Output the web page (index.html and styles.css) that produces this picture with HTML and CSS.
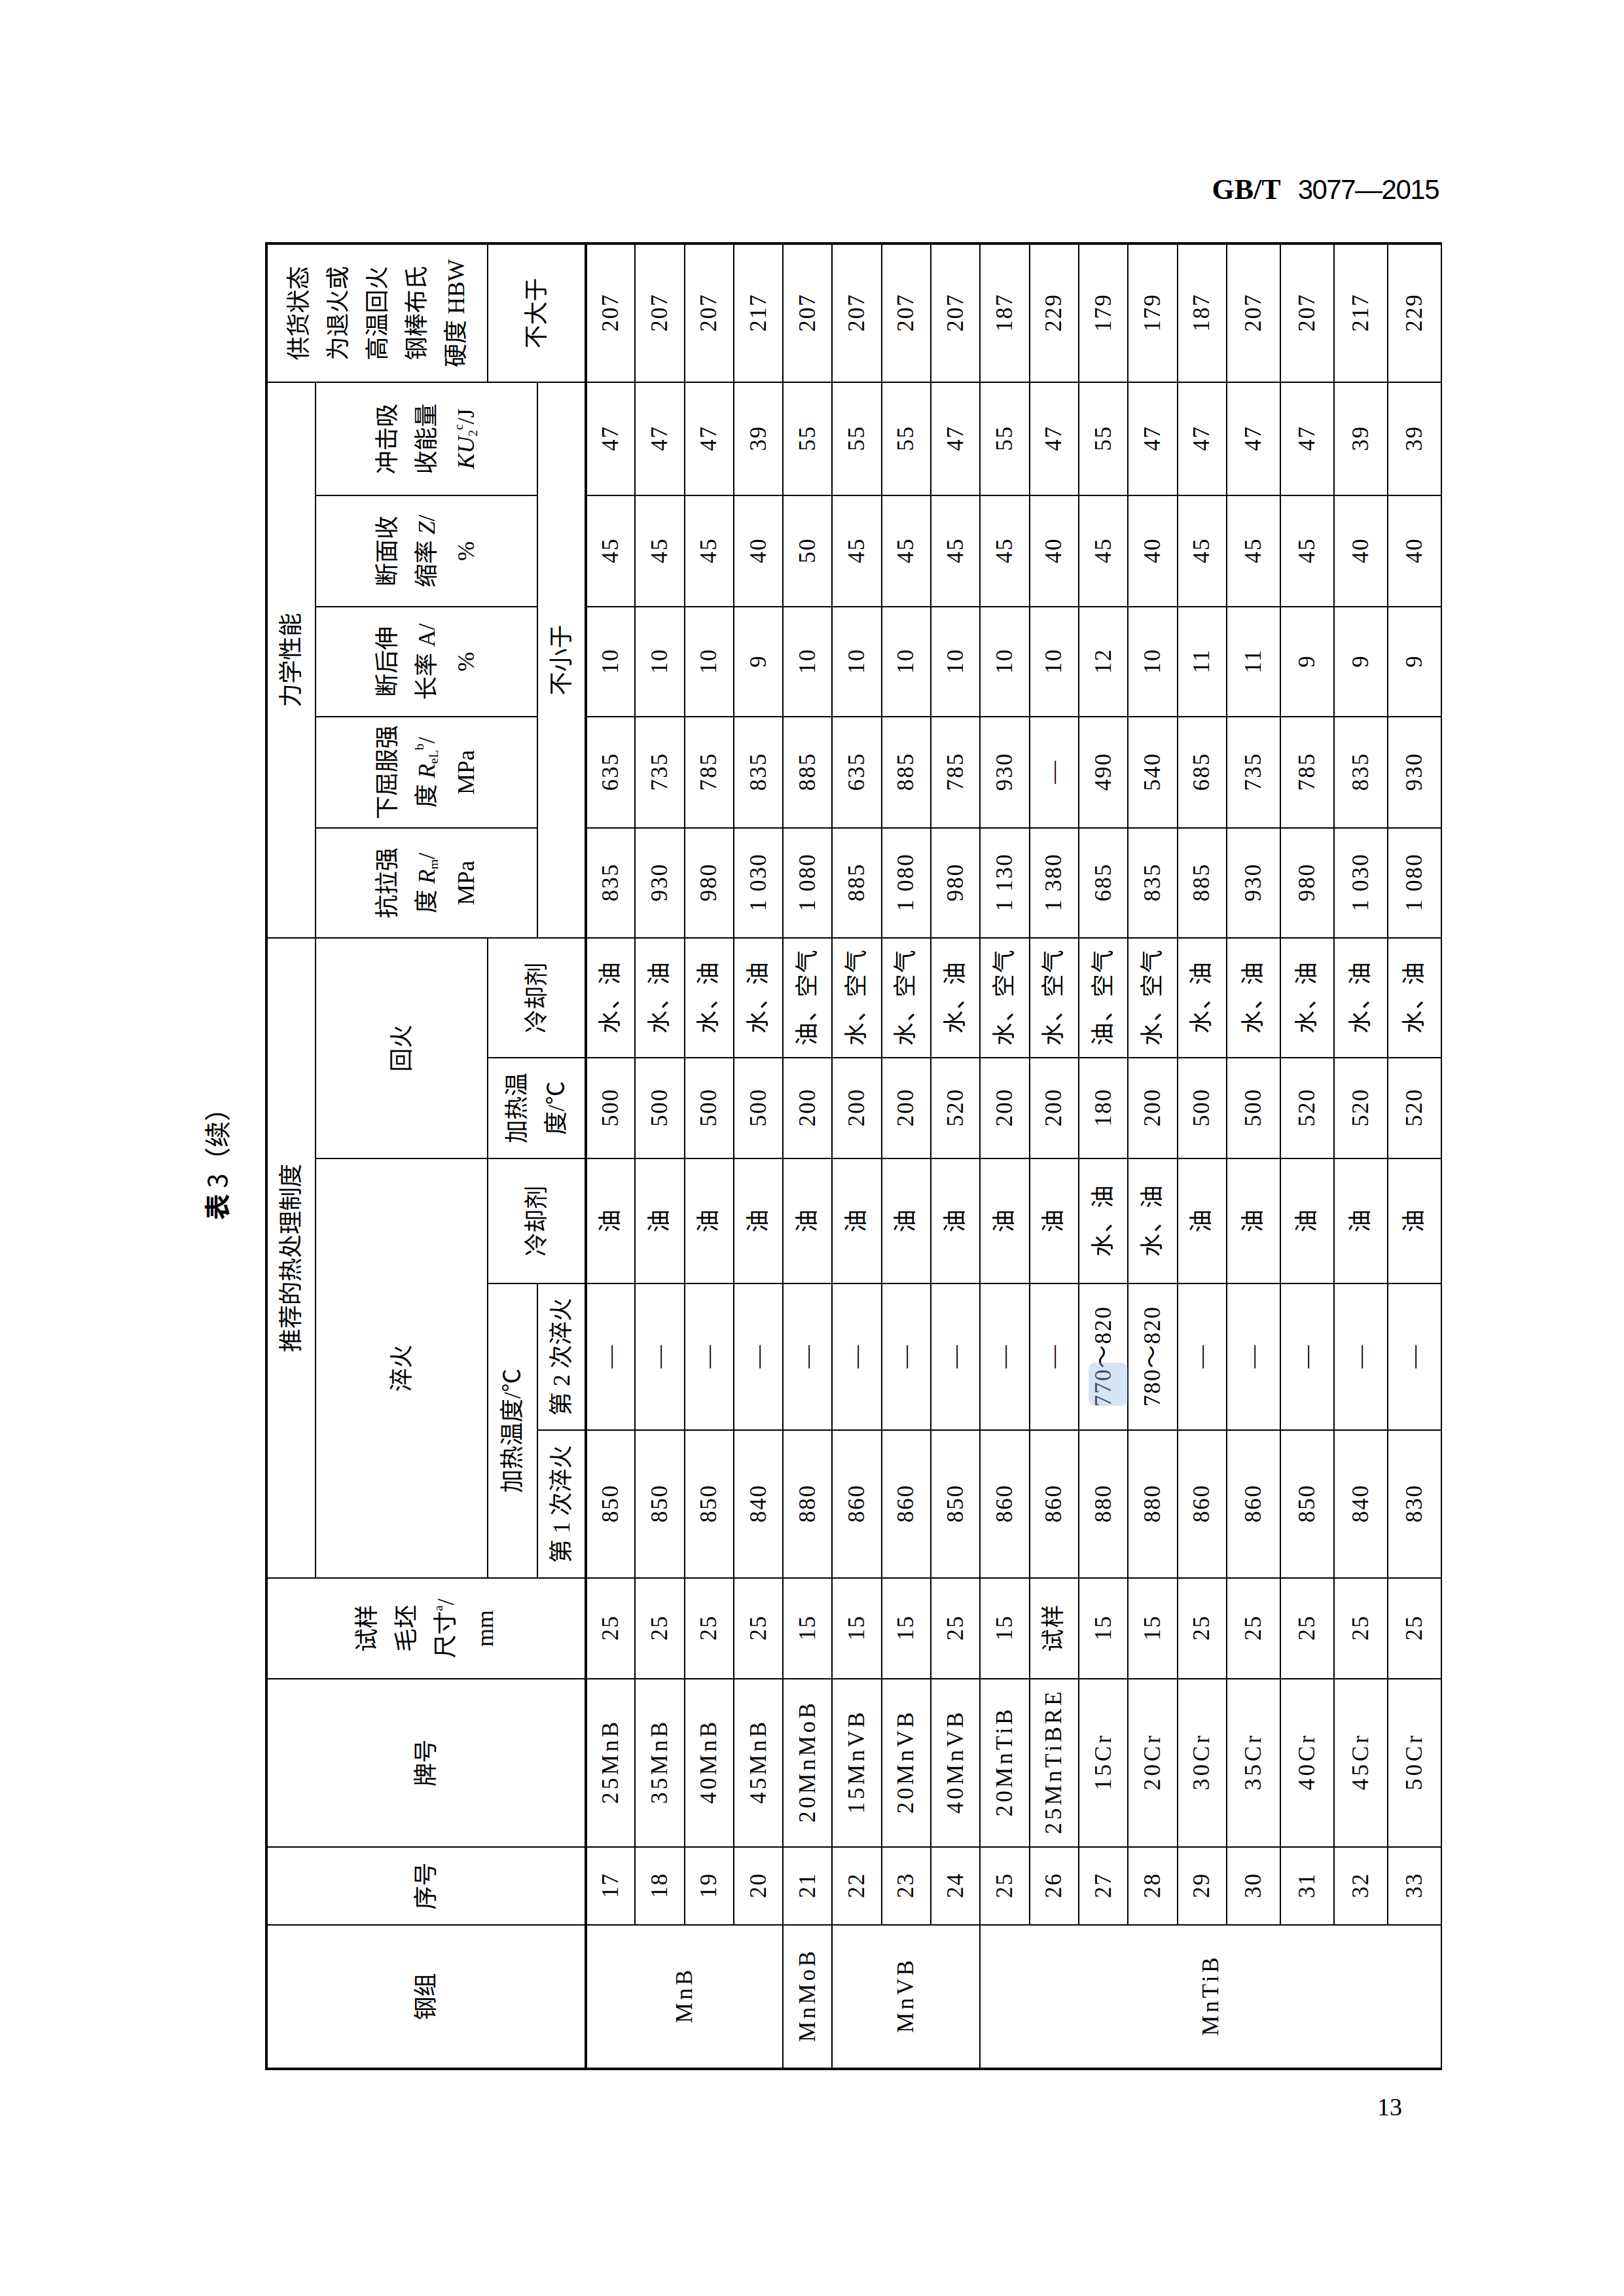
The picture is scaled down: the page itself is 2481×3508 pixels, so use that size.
FILE: index.html
```html
<!DOCTYPE html>
<html lang="zh-CN">
<head>
<meta charset="utf-8">
<title>GB/T 3077—2015 表3（续）</title>
<link rel="stylesheet" href="styles.css">
</head>
<body>
<div class="page">
  <div class="runhead"><span class="std">GB/T</span><span class="num">3077—2015</span></div>

  <div class="sheet">
    <div class="rot">
      <div class="caption"><b>表</b> 3（续）</div>
      <table class="grid">
        <colgroup>
          <col class="c-group"><col class="c-no"><col class="c-grade"><col class="c-size">
          <col class="c-q1"><col class="c-q2"><col class="c-qcool"><col class="c-ttemp"><col class="c-tcool">
          <col class="c-rm"><col class="c-rel"><col class="c-a"><col class="c-z"><col class="c-ku"><col class="c-hbw">
        </colgroup>
        <thead>
          <tr class="h1">
            <th rowspan="4">钢组</th>
            <th rowspan="4">序号</th>
            <th rowspan="4">牌号</th>
            <th rowspan="4">试样<br>毛坯<br>尺寸<sup>a</sup>/<br>mm</th>
            <th colspan="5">推荐的热处理制度</th>
            <th colspan="5">力学性能</th>
            <th rowspan="2">供货状态<br>为退火或<br>高温回火<br>钢棒布氏<br>硬度 HBW</th>
          </tr>
          <tr class="h2">
            <th colspan="3">淬火</th>
            <th colspan="2">回火</th>
            <th rowspan="2">抗拉强<br>度 <i>R</i><sub>m</sub>/<br>MPa</th>
            <th rowspan="2">下屈服强<br>度 <i>R</i><sub>eL</sub><sup>b</sup>/<br>MPa</th>
            <th rowspan="2">断后伸<br>长率 A/<br>%</th>
            <th rowspan="2">断面收<br>缩率 <i>Z</i>/<br>%</th>
            <th rowspan="2">冲击吸<br>收能量<br><i>KU</i><sub>2</sub><sup>c</sup>/J</th>
          </tr>
          <tr class="h3">
            <th colspan="2">加热温度/℃</th>
            <th rowspan="2">冷却剂</th>
            <th rowspan="2">加热温<br>度/℃</th>
            <th rowspan="2">冷却剂</th>
            <th rowspan="2">不大于</th>
          </tr>
          <tr class="h4">
            <th>第 1 次淬火</th>
            <th>第 2 次淬火</th>
            <th colspan="5">不小于</th>
          </tr>
        </thead>
        <tbody>
          <tr><td rowspan="4" class="gr">MnB</td><td>17</td><td class="gr">25MnB</td><td>25</td><td>850</td><td>—</td><td>油</td><td>500</td><td>水、油</td><td>835</td><td>635</td><td>10</td><td>45</td><td>47</td><td>207</td></tr>
          <tr><td>18</td><td class="gr">35MnB</td><td>25</td><td>850</td><td>—</td><td>油</td><td>500</td><td>水、油</td><td>930</td><td>735</td><td>10</td><td>45</td><td>47</td><td>207</td></tr>
          <tr><td>19</td><td class="gr">40MnB</td><td>25</td><td>850</td><td>—</td><td>油</td><td>500</td><td>水、油</td><td>980</td><td>785</td><td>10</td><td>45</td><td>47</td><td>207</td></tr>
          <tr><td>20</td><td class="gr">45MnB</td><td>25</td><td>840</td><td>—</td><td>油</td><td>500</td><td>水、油</td><td>1&nbsp;030</td><td>835</td><td>9</td><td>40</td><td>39</td><td>217</td></tr>
          <tr><td class="gr">MnMoB</td><td>21</td><td class="gr">20MnMoB</td><td>15</td><td>880</td><td>—</td><td>油</td><td>200</td><td>油、空气</td><td>1&nbsp;080</td><td>885</td><td>10</td><td>50</td><td>55</td><td>207</td></tr>
          <tr><td rowspan="3" class="gr">MnVB</td><td>22</td><td class="gr">15MnVB</td><td>15</td><td>860</td><td>—</td><td>油</td><td>200</td><td>水、空气</td><td>885</td><td>635</td><td>10</td><td>45</td><td>55</td><td>207</td></tr>
          <tr><td>23</td><td class="gr">20MnVB</td><td>15</td><td>860</td><td>—</td><td>油</td><td>200</td><td>水、空气</td><td>1&nbsp;080</td><td>885</td><td>10</td><td>45</td><td>55</td><td>207</td></tr>
          <tr><td>24</td><td class="gr">40MnVB</td><td>25</td><td>850</td><td>—</td><td>油</td><td>520</td><td>水、油</td><td>980</td><td>785</td><td>10</td><td>45</td><td>47</td><td>207</td></tr>
          <tr><td rowspan="9" class="gr">MnTiB</td><td>25</td><td class="gr">20MnTiB</td><td>15</td><td>860</td><td>—</td><td>油</td><td>200</td><td>水、空气</td><td>1&nbsp;130</td><td>930</td><td>10</td><td>45</td><td>55</td><td>187</td></tr>
          <tr><td>26</td><td class="gr">25MnTiBRE</td><td>试样</td><td>860</td><td>—</td><td>油</td><td>200</td><td>水、空气</td><td>1&nbsp;380</td><td>—</td><td>10</td><td>40</td><td>47</td><td>229</td></tr>
          <tr><td>27</td><td class="gr">15Cr</td><td>15</td><td>880</td><td class="wm-cell">770～820<span class="wm"></span></td><td>水、油</td><td>180</td><td>油、空气</td><td>685</td><td>490</td><td>12</td><td>45</td><td>55</td><td>179</td></tr>
          <tr><td>28</td><td class="gr">20Cr</td><td>15</td><td>880</td><td>780～820</td><td>水、油</td><td>200</td><td>水、空气</td><td>835</td><td>540</td><td>10</td><td>40</td><td>47</td><td>179</td></tr>
          <tr><td>29</td><td class="gr">30Cr</td><td>25</td><td>860</td><td>—</td><td>油</td><td>500</td><td>水、油</td><td>885</td><td>685</td><td>11</td><td>45</td><td>47</td><td>187</td></tr>
          <tr class="tall"><td>30</td><td class="gr">35Cr</td><td>25</td><td>860</td><td>—</td><td>油</td><td>500</td><td>水、油</td><td>930</td><td>735</td><td>11</td><td>45</td><td>47</td><td>207</td></tr>
          <tr class="tall"><td>31</td><td class="gr">40Cr</td><td>25</td><td>850</td><td>—</td><td>油</td><td>520</td><td>水、油</td><td>980</td><td>785</td><td>9</td><td>45</td><td>47</td><td>207</td></tr>
          <tr class="tall"><td>32</td><td class="gr">45Cr</td><td>25</td><td>840</td><td>—</td><td>油</td><td>520</td><td>水、油</td><td>1&nbsp;030</td><td>835</td><td>9</td><td>40</td><td>39</td><td>217</td></tr>
          <tr class="tall"><td>33</td><td class="gr">50Cr</td><td>25</td><td>830</td><td>—</td><td>油</td><td>520</td><td>水、油</td><td>1&nbsp;080</td><td>930</td><td>9</td><td>40</td><td>39</td><td>229</td></tr>
        </tbody>
      </table>
    </div>
  </div>

  <div class="folio">13</div>
</div>
</body>
</html>
```

FILE: styles.css
```css
html, body {
  margin: 0;
  padding: 0;
  background: #fff;
}
body {
  width: 2481px;
  height: 3508px;
  overflow: hidden;
  color: #000;
  font-family: "Liberation Serif", "Noto Sans CJK SC", serif;
}
.page {
  width: 2481px;
}
.runhead {
  height: 50px;
  line-height: 50px;
  padding-top: 265px;
  padding-right: 283px;
  text-align: right;
  white-space: nowrap;
}
.runhead .std {
  font-family: "Liberation Serif", serif;
  font-weight: 700;
  font-size: 44px;
}
.runhead .num {
  font-family: "Liberation Sans", sans-serif;
  font-size: 42px;
  letter-spacing: -1.5px;
  margin-left: 26px;
}
.sheet {
  width: 1910px;
  height: 2789px;
  margin-top: 59px;
  margin-left: 290px;
}
.rot {
  width: 2789px;
  transform-origin: 0 0;
  transform: translateY(2789px) rotate(-90deg);
}
.caption {
  height: 80px;
  line-height: 80px;
  text-align: center;
  font-family: "Noto Sans CJK SC", sans-serif;
  font-size: 40px;
}
.caption b {
  font-weight: 700;
}
.grid {
  width: 2789px;
  margin-top: 35px;
  border-collapse: collapse;
  table-layout: fixed;
  border: 4px solid #000;
  border-bottom-width: 2px;
}
.c-group { width: 220px; }
.c-no { width: 119px; }
.c-grade { width: 257px; }
.c-size { width: 154px; }
.c-q1 { width: 226px; }
.c-q2 { width: 224px; }
.c-qcool { width: 191px; }
.c-ttemp { width: 154px; }
.c-tcool { width: 183px; }
.c-rm { width: 168px; }
.c-rel { width: 170px; }
.c-a { width: 168px; }
.c-z { width: 170px; }
.c-ku { width: 173px; }
.c-hbw { width: 212px; }

.grid th, .grid td {
  border: 2px solid #000;
  padding: 0;
  text-align: center;
  vertical-align: middle;
  font-weight: 400;
  white-space: nowrap;
}
.grid th {
  font-size: 36px;
  line-height: 60px;
}
.grid td {
  font-size: 35px;
  line-height: 40px;
  letter-spacing: 2px;
  padding-left: 2px;
}
.grid td.gr {
  letter-spacing: 4.5px;
  padding-left: 4.5px;
}
.grid tbody tr:first-child td {
  border-top-width: 4px;
}
.h1 { height: 75px; }
.h2 { height: 263px; }
.h3 { height: 76px; }
.h4 { height: 74px; }
.grid tbody tr { height: 75.3px; }
.grid tbody tr.tall { height: 82px; }

.grid sup, .grid sub {
  font-size: 0.55em;
  line-height: 0;
}
.grid sup { vertical-align: 0.85em; }
.grid sub { vertical-align: -0.25em; }

.wm-cell {
  position: relative;
}
.wm {
  position: absolute;
  left: 36px;
  top: 14px;
  width: 66px;
  height: 60px;
  border-radius: 10px;
  background: rgba(150, 190, 230, 0.4);
}
.folio {
  margin-top: 31px;
  height: 50px;
  line-height: 50px;
  padding-right: 339px;
  text-align: right;
  font-family: "Liberation Serif", serif;
  font-size: 38px;
}
```
